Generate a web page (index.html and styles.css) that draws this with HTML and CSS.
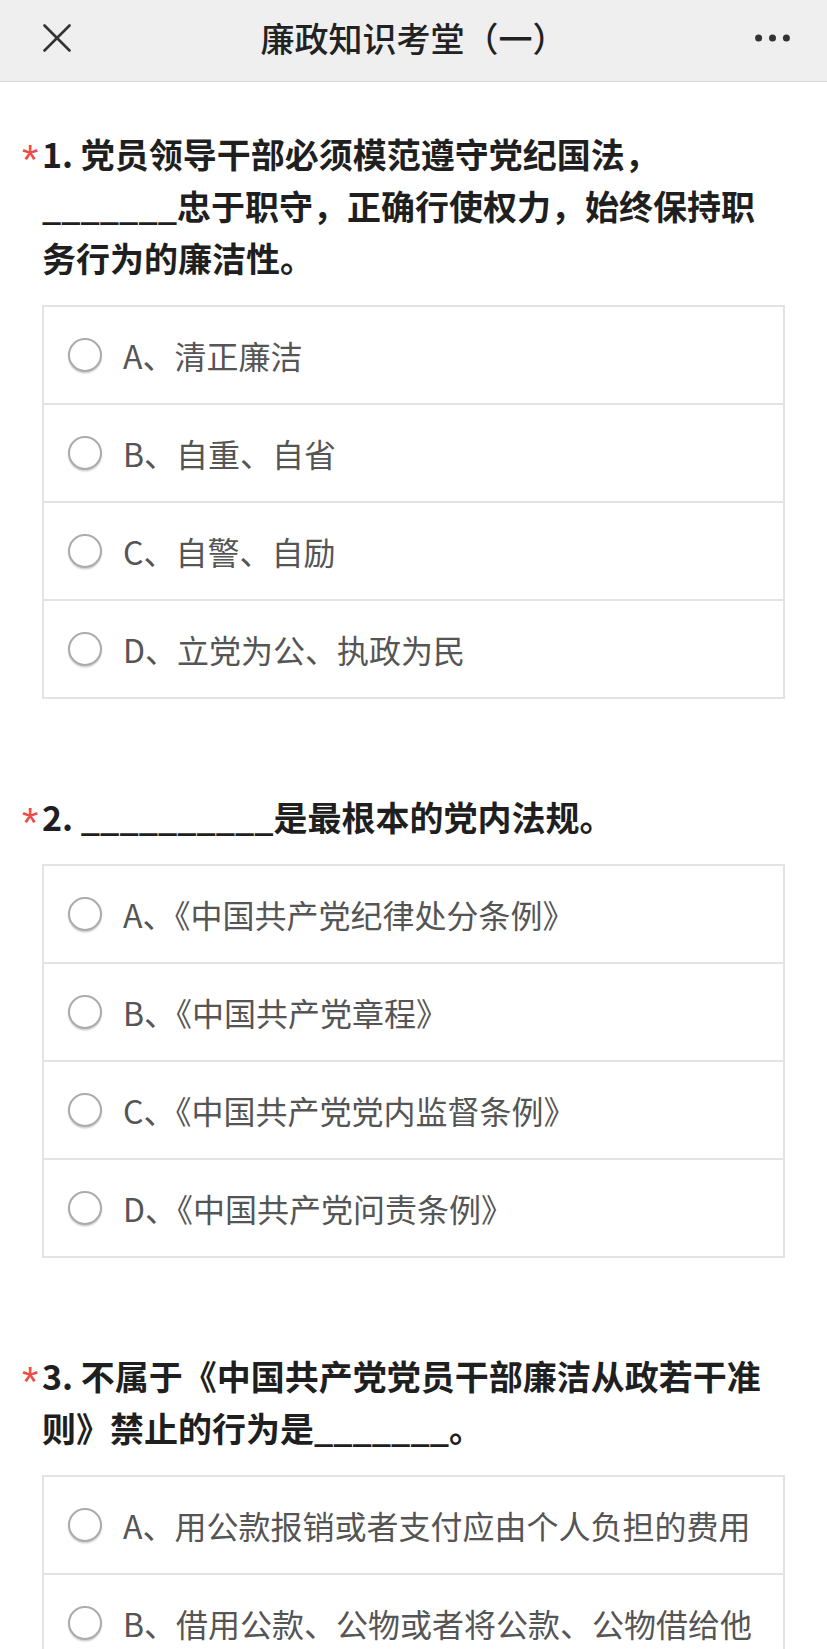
FILE: index.html
```html
<!DOCTYPE html>
<html lang="zh-CN">
<head>
<meta charset="utf-8">
<title>廉政知识考堂（一）</title>
<link rel="stylesheet" href="styles.css">
</head>
<body>
<header class="topbar">
  <div class="topbar-left">
    <svg class="icon-close" width="28" height="28" viewBox="0 0 28 28" aria-hidden="true">
      <path d="M1.5 1.5 L26.5 26.5 M26.5 1.5 L1.5 26.5" stroke="#333" stroke-width="2.6" stroke-linecap="round" fill="none"/>
    </svg>
  </div>
  <h1 class="topbar-title">廉政知识考堂（一）</h1>
  <div class="topbar-right">
    <svg class="icon-more" width="35" height="8" viewBox="0 0 35 8" aria-hidden="true">
      <circle cx="3.6" cy="4" r="3.5" fill="#333"/>
      <circle cx="17.5" cy="4" r="3.5" fill="#333"/>
      <circle cx="31.4" cy="4" r="3.5" fill="#333"/>
    </svg>
  </div>
</header>

<main class="survey">
  <section class="question">
    <div class="q-title"><span class="star">*</span><span class="q-text">1. 党员领导干部必须模范遵守党纪国法，_______忠于职守，正确行使权力，始终保持职务行为的廉洁性。</span></div>
    <ul class="options">
      <li class="option"><span class="radio"></span><span class="opt-text">A、清正廉洁</span></li>
      <li class="option"><span class="radio"></span><span class="opt-text">B、自重、自省</span></li>
      <li class="option"><span class="radio"></span><span class="opt-text">C、自警、自励</span></li>
      <li class="option"><span class="radio"></span><span class="opt-text">D、立党为公、执政为民</span></li>
    </ul>
  </section>

  <section class="question">
    <div class="q-title"><span class="star">*</span><span class="q-text">2. __________是最根本的党内法规。</span></div>
    <ul class="options">
      <li class="option"><span class="radio"></span><span class="opt-text">A、《中国共产党纪律处分条例》</span></li>
      <li class="option"><span class="radio"></span><span class="opt-text">B、《中国共产党章程》</span></li>
      <li class="option"><span class="radio"></span><span class="opt-text">C、《中国共产党党内监督条例》</span></li>
      <li class="option"><span class="radio"></span><span class="opt-text">D、《中国共产党问责条例》</span></li>
    </ul>
  </section>

  <section class="question">
    <div class="q-title"><span class="star">*</span><span class="q-text">3. 不属于《中国共产党党员干部廉洁从政若干准则》禁止的行为是_______。</span></div>
    <ul class="options">
      <li class="option"><span class="radio"></span><span class="opt-text">A、用公款报销或者支付应由个人负担的费用</span></li>
      <li class="option"><span class="radio"></span><span class="opt-text">B、借用公款、公物或者将公款、公物借给他人</span></li>
    </ul>
  </section>
</main>
</body>
</html>
```

FILE: styles.css
```css
* {
  box-sizing: border-box;
}

html, body {
  margin: 0;
  padding: 0;
  background: #ffffff;
}

body {
  font-family: "Noto Sans CJK SC", "Noto Sans", sans-serif;
  color: #222;
}

.topbar {
  display: grid;
  grid-template-columns: 1fr auto 1fr;
  align-items: center;
  height: 82px;
  padding-bottom: 5px;
  background: #efefef;
  border-bottom: 1px solid #dcdcdc;
}

.topbar-left {
  display: flex;
  align-items: center;
  padding-left: 43px;
}

.icon-close {
  display: block;
}

.topbar-title {
  margin: 0;
  font-size: 34px;
  font-weight: 500;
  line-height: 40px;
  color: #222;
  white-space: nowrap;
}

.topbar-right {
  display: flex;
  justify-content: flex-end;
  padding-right: 37px;
}

.icon-more {
  display: block;
}

.survey {
  padding: 46px 42px 0 42px;
}

.question + .question {
  margin-top: 92px;
}

.q-title {
  display: flex;
  align-items: flex-start;
  margin-left: -20px;
  padding-right: 10px;
}

.star {
  flex: none;
  width: 20px;
  margin-top: 11px;
  font-family: "Liberation Sans", sans-serif;
  font-size: 42px;
  line-height: 42px;
  height: 30px;
  color: #ee4a4a;
}

.q-text {
  font-size: 34px;
  line-height: 52px;
  font-weight: 600;
  color: #1f1f1f;
}

.options {
  list-style: none;
  margin: 21px 0 0 0;
  padding: 0;
  border: 2px solid #e3e3e3;
}

.option {
  display: flex;
  align-items: flex-start;
  padding: 26px 24px 26px 24px;
  min-height: 96px;
}

.option + .option {
  border-top: 2px solid #e3e3e3;
  min-height: 98px;
}

.radio {
  flex: none;
  width: 34px;
  height: 34px;
  margin-top: 5px;
  margin-right: 21px;
  border: 2px solid #ababab;
  border-radius: 50%;
  background: #fff;
  box-shadow: 0 1.5px 1.5px rgba(0, 0, 0, 0.18);
}

.opt-text {
  font-size: 32px;
  line-height: 44px;
  color: #555;
}
```
